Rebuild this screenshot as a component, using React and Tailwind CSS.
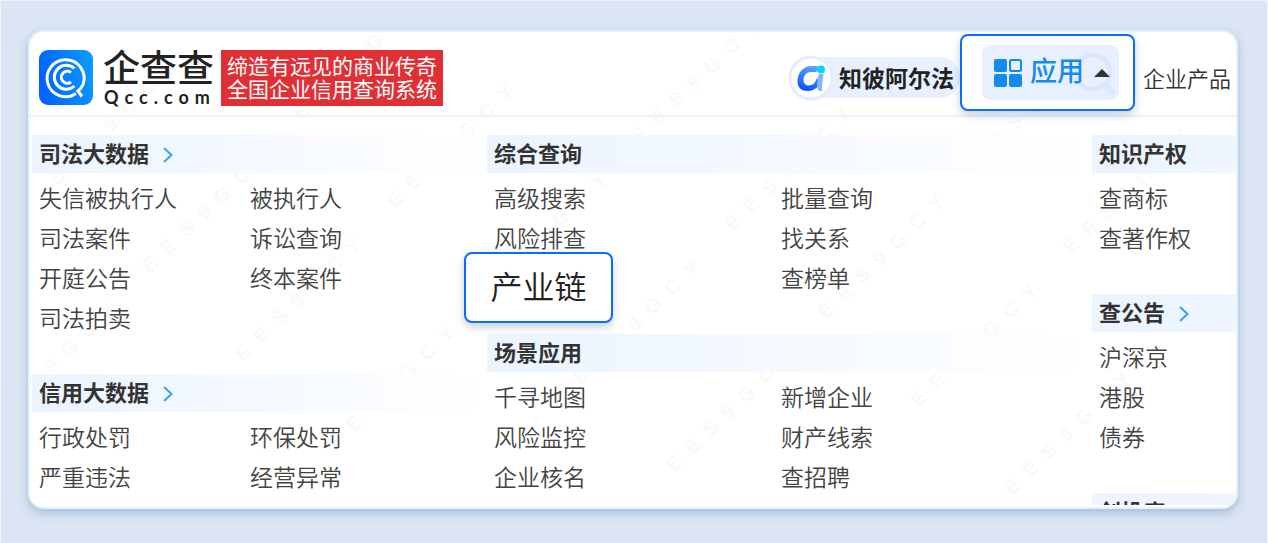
import React from 'react';

const columns = [
  {
    grid: 'grid-cols-[211fr_237fr]',
    bar: 'to-white',
    sections: [
      {
        title: '司法大数据',
        more: true,
        items: ['失信被执行人', '被执行人', '司法案件', '诉讼查询', '开庭公告', '终本案件', '司法拍卖'],
      },
      {
        title: '信用大数据',
        more: true,
        items: ['行政处罚', '环保处罚', '严重违法', '经营异常'],
      },
    ],
  },
  {
    grid: 'grid-cols-[287fr_311fr]',
    bar: 'to-white',
    sections: [
      {
        title: '综合查询',
        items: ['高级搜索', '批量查询', '风险排查', '找关系', '产业链', '查榜单'],
      },
      {
        title: '场景应用',
        items: ['千寻地图', '新增企业', '风险监控', '财产线索', '企业核名', '查招聘'],
      },
    ],
  },
  {
    grid: 'grid-cols-1',
    bar: 'to-[#eff6ff]',
    sections: [
      { title: '知识产权', items: ['查商标', '查著作权'] },
      { title: '查公告', more: true, items: ['沪深京', '港股', '债券'] },
      { title: '创投库', clipped: true, items: [] },
    ],
  },
];

// start points of the watermark strings
const marks = [
  [57, 180], [150, 268], [243, 356], [336, 444], [-3, 421],
  [302, 115], [395, 203], [488, 291], [581, 379], [674, 467],
  [640, 138], [733, 226], [826, 314], [919, 402], [1012, 490],
  [978, 161], [1071, 249],
];

const Watermark = () => (
  <svg
    className="pointer-events-none absolute inset-0 h-full w-full"
    aria-hidden="true"
  >
    {marks.map(([x, y]) => (
      <text
        key={`${x}-${y}`}
        transform={`translate(${x - 30} ${y - 26}) rotate(-44)`}
        className="fill-[#f9f9f9] font-['Liberation_Sans',sans-serif] text-[20px] font-bold tracking-[12px]"
      >
        EES9GCY
      </text>
    ))}
  </svg>
);

const Logo = () => (
  <svg viewBox="0 0 54 55" className="h-[55px] w-[54px] shrink-0" aria-hidden="true">
    <defs>
      <linearGradient id="logoBg" x1="0" x2="1" y1="0.2" y2="0">
        <stop offset="0" stopColor="#0066ff" />
        <stop offset="1" stopColor="#0a9dff" />
      </linearGradient>
    </defs>
    <rect width="54" height="55" rx="9" fill="url(#logoBg)" />
    <g fill="none" stroke="#fff" strokeWidth="3">
      <path d="M37 43.500A18.500 18.500 0 1 1 44 34.500Q42.500 38 39 41L43 46.500" />
      <path d="M35.500 18.500A12 12 0 1 0 35.500 36" />
      <path d="M32 22.500A6 6 0 1 0 32 32" />
    </g>
  </svg>
);

const AlphaIcon = () => (
  <svg viewBox="0 0 44 48" className="relative z-10 -mr-8 h-12 w-11 shrink-0" aria-hidden="true">
    <defs>
      <linearGradient id="alphaBlue" x1="0.6" x2="0.3" y1="0" y2="1">
        <stop offset="0" stopColor="#5ba3ff" />
        <stop offset="1" stopColor="#0a4dff" />
      </linearGradient>
    </defs>
    <circle cx="22" cy="24" r="21" fill="#fff" stroke="#e3edff" strokeWidth="3" />
    <path
      d="M29 12L27.500 18H22C17 18 14.500 22 14.500 26C14.500 29.500 17 31.500 20 31.500C24 31.500 27 28 28 23L30 31C27 35 23 37 18.500 37C12 37 8.500 33 8.500 27.500C8.500 19 14 12 22.500 12Z"
      fill="url(#alphaBlue)"
    />
    <path d="M29.500 20h5l-1.500 12q-.5 3 .5 5h-3.500q-2.500-3-2-7z" fill="#83b4ff" />
    <circle cx="32" cy="15.500" r="4" fill="#06d7f5" />
  </svg>
);

const Header = () => (
  <header className="relative flex h-[85px] items-center border-b-2 border-[#f1f1f1] pt-2 pr-[5px] pl-[9px]">
    <a href="#home" className="flex items-center">
      <Logo />
      <span className="ml-[10px] flex w-[111px] flex-col pt-[2px] text-[#222]">
        <span className="text-[37px] leading-9 font-medium whitespace-nowrap">企查查</span>
        <span className="pl-px font-['Lato',sans-serif] text-[18px] leading-[18px] font-bold tracking-[6px]">
          Qcc.com
        </span>
      </span>
    </a>
    <p className="ml-[7px] bg-[#e03035] px-[6px] py-[5px] text-[21px] leading-[23px] whitespace-nowrap text-white">
      缔造有远见的商业传奇
      <br />
      全国企业信用查询系统
    </p>

    <nav className="ml-auto flex h-full items-center whitespace-nowrap">
      <a href="#alpha" className="flex items-center text-[#222]">
        <AlphaIcon />
        <span className="flex h-[41px] items-center rounded-r-full bg-[#e8f0ff] pt-1 pr-1.5 pl-[38px] text-[23px] font-bold">
          知彼阿尔法
        </span>
      </a>
      <div className="relative z-10 -mt-1.5 h-[77px] w-[175px] self-start rounded-lg border-2 border-[#0b6bff] bg-white py-[9px] pr-[14px] pl-5 shadow-[0_4px_8px_rgba(60,100,130,0.3)]">
        <button
          type="button"
          className="relative flex h-[55px] w-full items-center rounded-lg bg-[#e8f0ff] pl-3 text-[27px] font-medium text-[#128bed]"
        >
          <svg viewBox="0 0 42 46" className="absolute right-0.5 bottom-0.5 h-[46px] w-[42px]" fill="none" stroke="#d9e8fd" aria-hidden="true">
            <circle cx="18" cy="20" r="17" strokeWidth="4" />
            <path d="M30 33l7 7" strokeWidth="7" strokeLinecap="round" />
          </svg>
          <svg viewBox="0 0 28 28" className="relative h-7 w-7" fill="#128bed" aria-hidden="true">
            <rect width="13" height="13" rx="2" />
            <rect x="16" y="1" width="11" height="11" rx="1.5" fill="none" stroke="#128bed" strokeWidth="2" />
            <rect y="15" width="13" height="13" rx="2" />
            <rect x="15" y="15" width="13" height="13" rx="2" />
          </svg>
          <span className="relative ml-2">应用</span>
          <svg viewBox="0 0 16 8" className="relative ml-2.5 h-2 w-4" fill="#333" aria-hidden="true">
            <path d="M8 0l8 8H0z" />
          </svg>
        </button>
      </div>
      <a href="#products" className="ml-2 pt-1 text-[22px] font-[350] text-[#333]">
        企业产品
      </a>
    </nav>
  </header>
);

const Section = ({ title, more, clipped, items, grid, bar }) => (
  <section>
    <div className={clipped ? 'h-3 overflow-hidden' : ''}>
      <h2 className={`flex h-[38px] items-center bg-linear-to-r from-[#ebf4ff] pt-px pl-[7px] text-[22px] font-bold text-[#333] ${bar}`}>
        {title}
        {more && (
          <svg viewBox="0 0 10 16" className="ml-3.5 h-4 w-[10px]" fill="none" stroke="#3aa0f7" strokeWidth="2" aria-hidden="true">
            <path d="M1 1l7.500 7L1 15" />
          </svg>
        )}
      </h2>
    </div>
    {items.length > 0 && (
      <ul className={`mt-1.5 mb-px grid pl-[7px] ${grid}`}>
        {items.map((item) =>
          item === '产业链' ? (
            <li key={item} className="relative h-10">
              <a
                href="#chain"
                className="absolute top-[-7px] -left-[30px] flex h-[71px] w-[149px] items-center justify-center rounded-lg border-2 border-[#0b6bff] bg-white text-[32px] font-[350] text-[#222] shadow-[0_4px_8px_rgba(60,100,130,0.3)]"
              >
                {item}
              </a>
            </li>
          ) : (
            <li key={item} className="flex h-10 items-center">
              <a href="#item" className="text-[23px] font-[350] whitespace-nowrap text-[#444]">
                {item}
              </a>
            </li>
          )
        )}
      </ul>
    )}
  </section>
);

export default function App() {
  return (
    <div className="min-h-screen border border-[#edf3fa] bg-[#dbe5f3] pt-[29px] pr-[29px] pb-[34px] pl-[27px] font-['Liberation_Sans','Noto_Sans_CJK_SC',sans-serif]">
      <main className="relative overflow-hidden rounded-2xl border-2 border-[#e2f3fd] bg-white pb-[2px] shadow-[0_4px_10px_rgba(80,130,175,0.4)]">
        <Watermark />
        <Header />
        <div className="relative grid grid-cols-[455fr_605fr_144fr] pt-[18px] pl-[2px]">
          {columns.map((column, i) => (
            <div key={i} className="flex min-w-0 flex-col gap-[34px]">
              {column.sections.map((section) => (
                <Section key={section.title} {...section} grid={column.grid} bar={column.bar} />
              ))}
            </div>
          ))}
        </div>
      </main>
    </div>
  );
}
